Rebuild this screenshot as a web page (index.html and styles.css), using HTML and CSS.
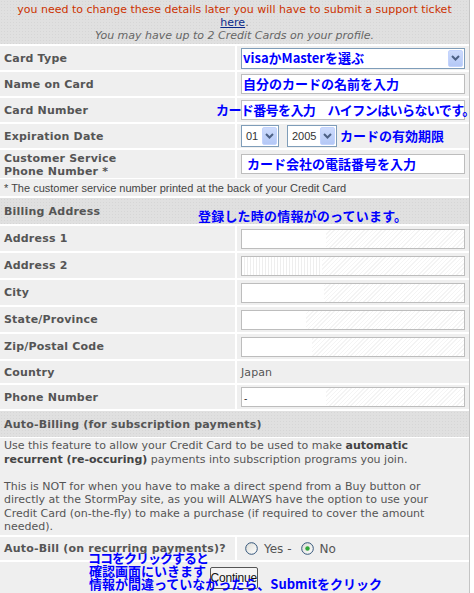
FILE: index.html
```html
<!DOCTYPE html>
<html lang="ja">
<head>
<meta charset="utf-8">
<title>Credit Card</title>
<link rel="stylesheet" href="styles.css">
</head>
<body>
<div class="page">
  <div class="notice">
    <div class="warn">you need to change these details later you will have to submit a support ticket</div>
    <div><a class="link" href="#">here</a>.</div>
    <div class="hint">You may have up to 2 Credit Cards on your profile.</div>
  </div>

  <div class="row h24">
    <div class="lab">Card Type</div>
    <div class="val">
      <div class="select wide">
        <span class="jp">visaかMasterを選ぶ</span>
        <span class="arrow"><svg width="9" height="6" viewBox="0 0 9 6"><path d="M1 1 L4.5 4.5 L8 1" fill="none" stroke="#4d6185" stroke-width="2"/></svg></span>
      </div>
    </div>
  </div>

  <div class="row h24">
    <div class="lab">Name on Card</div>
    <div class="val"><div class="field plain"><span class="jp">自分のカードの名前を入力</span></div></div>
  </div>

  <div class="row h24 rel">
    <div class="lab">Card Number</div>
    <div class="val"><div class="field plain"></div></div>
    <div class="note note-number">カード番号を入力　ハイフンはいらないです。</div>
  </div>

  <div class="row h24">
    <div class="lab">Expiration Date</div>
    <div class="val">
      <div class="select small month">
        <span class="opt">01</span>
        <span class="arrow"><svg width="9" height="6" viewBox="0 0 9 6"><path d="M1 1 L4.5 4.5 L8 1" fill="none" stroke="#4d6185" stroke-width="2"/></svg></span>
      </div>
      <div class="select small year">
        <span class="opt">2005</span>
        <span class="arrow"><svg width="9" height="6" viewBox="0 0 9 6"><path d="M1 1 L4.5 4.5 L8 1" fill="none" stroke="#4d6185" stroke-width="2"/></svg></span>
      </div>
      <span class="jp jp-after">カードの有効期限</span>
    </div>
  </div>

  <div class="row h28">
    <div class="lab two">Customer Service<br>Phone Number *</div>
    <div class="val"><div class="field plain"><span class="jp jp-pad">カード会社の電話番号を入力</span></div></div>
  </div>

  <div class="footnote">* The customer service number printed at the back of your Credit Card</div>

  <div class="section rel">
    <span>Billing Address</span>
    <div class="note note-billing">登録した時の情報がのっています。</div>
  </div>

  <div class="row h25">
    <div class="lab">Address 1</div>
    <div class="val"><div class="field"><span class="patch p84"></span></div></div>
  </div>
  <div class="row h25">
    <div class="lab">Address 2</div>
    <div class="val"><div class="field stripes"></div></div>
  </div>
  <div class="row h25">
    <div class="lab">City</div>
    <div class="val"><div class="field"><span class="patch p82"></span></div></div>
  </div>
  <div class="row h25">
    <div class="lab">State/Province</div>
    <div class="val"><div class="field"><span class="patch p64"></span></div></div>
  </div>
  <div class="row h25">
    <div class="lab">Zip/Postal Code</div>
    <div class="val"><div class="field"><span class="patch p70"></span></div></div>
  </div>
  <div class="row h22">
    <div class="lab">Country</div>
    <div class="val country">Japan</div>
  </div>
  <div class="row h24">
    <div class="lab">Phone Number</div>
    <div class="val"><div class="field"><span class="patch p84"></span><span class="dash">-</span></div></div>
  </div>

  <div class="section">
    <span>Auto-Billing (for subscription payments)</span>
  </div>

  <div class="info">
    <p>Use this feature to allow your Credit Card to be used to make <b>automatic recurrent (re-occuring)</b> payments into subscription programs you join.</p>
    <p>This is NOT for when you have to make a direct spend from a Buy button or directly at the StormPay site, as you will ALWAYS have the option to use your Credit Card (on-the-fly) to make a purchase (if required to cover the amount needed).</p>
  </div>

  <div class="row h23">
    <div class="lab">Auto-Bill (on recurring payments)?</div>
    <div class="val radios">
      <span class="radio"><svg width="13" height="13" viewBox="0 0 13 13"><defs><linearGradient id="rg" x1="0" y1="0" x2="1" y2="1"><stop offset="0" stop-color="#dcdcd6"/><stop offset="1" stop-color="#ffffff"/></linearGradient></defs><circle cx="6.5" cy="6.5" r="5.8" fill="url(#rg)" stroke="#33557a" stroke-width="1"/></svg></span>
      <span class="rlabel">Yes -</span>
      <span class="radio"><svg width="13" height="13" viewBox="0 0 13 13"><circle cx="6.5" cy="6.5" r="5.8" fill="url(#rg)" stroke="#33557a" stroke-width="1"/><circle cx="6.5" cy="6.5" r="2.2" fill="#2fa83a"/></svg></span>
      <span class="rlabel">No</span>
    </div>
  </div>

  <div class="bottom rel">
    <button class="continue" type="button">Continue</button>
    <div class="note note-b1">ココをクリックすると</div>
    <div class="note note-b2">確認画面にいきます</div>
    <div class="note note-b3">情報が間違っていなかったら、Submitをクリック</div>
  </div>
</div>
</body>
</html>
```

FILE: styles.css
```css
html, body {
  margin: 0;
  padding: 0;
  background: #ffffff;
}
body {
  font: 11px "DejaVu Sans", Verdana, sans-serif;
  color: #555555;
  overflow: hidden;
}
.page {
  width: 469px;
  border-right: 1px solid #c4c4c4;
  background: #ffffff;
}
.rel { position: relative; }

.notice {
  height: 44px;
  box-sizing: border-box;
  padding-top: 3px;
  background-color: #e0e0e0;
  background-image: radial-gradient(#d6d6d6 0.6px, transparent 0.7px);
  background-size: 3px 3px;
  text-align: center;
  line-height: 13px;
}
.warn { color: #cc3300; }
.link { color: #0a2a8a; text-decoration: underline; }
.hint { color: #666666; font-style: italic; }

.row {
  display: grid;
  grid-template-columns: 235px 1fr;
  margin-top: 2px;
}
.h22 { height: 22px; }
.h23 { height: 23px; }
.h24 { height: 24px; }
.h25 { height: 25px; }
.h28 { height: 28px; }

.lab {
  background: #efefef;
  padding-left: 4px;
  font-weight: bold;
  color: #555555;
  display: flex;
  align-items: center;
  letter-spacing: 0.2px;
}
.lab.two { line-height: 13px; align-items: flex-start; padding-top: 2px; }
.val {
  background: #efefef;
  margin-left: 2px;
  padding-left: 4px;
  display: flex;
  align-items: center;
}

.jp {
  font-family: "Noto Sans CJK JP", sans-serif;
  font-weight: bold;
  font-size: 13px;
  color: #0000ff;
  line-height: 16px;
  white-space: nowrap;
}
.jp-pad { padding-left: 4px; }
.jp-after { margin-left: 3px; }

.field {
  position: relative;
  width: 224px;
  height: 20px;
  box-sizing: border-box;
  border: 1px solid #bdbdbd;
  background: repeating-linear-gradient(135deg, #ffffff 0 2px, #f4f4f4 2px 3px);
  display: flex;
  align-items: center;
  padding-left: 1px;
}
.field.plain { background: #ffffff; }
.field.stripes {
  background:
    repeating-linear-gradient(90deg, #ffffff 0 2px, #eeeeee 2px 3px) left / 80px 100% no-repeat,
    repeating-linear-gradient(135deg, #ffffff 0 2px, #f4f4f4 2px 3px);
}
.patch {
  position: absolute;
  left: 0;
  top: 0;
  bottom: 0;
  background: #ffffff;
}
.p64 { width: 64px; }
.p70 { width: 70px; }
.p82 { width: 82px; }
.p84 { width: 84px; }
.dash {
  position: absolute;
  left: 2px;
  top: 5px;
  font: 10px "Liberation Sans", Arial, sans-serif;
  color: #333;
}

.select {
  box-sizing: border-box;
  height: 21px;
  border: 1px solid #7f9db9;
  background: #ffffff;
  display: flex;
  align-items: center;
  justify-content: space-between;
  padding-left: 1px;
}
.select.wide { width: 224px; }
.select.small { height: 22px; }
.select.month { width: 38px; }
.select.year { width: 50px; margin-left: 8px; }
.opt {
  font: 11px "Liberation Sans", Arial, sans-serif;
  color: #333333;
  padding-left: 3px;
}
.arrow {
  width: 15px;
  height: 17px;
  margin-right: 1px;
  box-sizing: border-box;
  border: 1px solid #c3d3fd;
  border-radius: 2px;
  background: linear-gradient(#cddbfc, #b4c8f6);
  display: flex;
  align-items: center;
  justify-content: center;
}
.select.small .arrow { height: 18px; }

.country {
  color: #555555;
  letter-spacing: 0.1px;
}

.footnote {
  background: #efefef;
  height: 17px;
  margin-top: 1px;
  padding-left: 4px;
  display: flex;
  align-items: center;
  font: 11px "Liberation Sans", Arial, sans-serif;
  color: #444444;
}

.section {
  margin-top: 2px;
  height: 26px;
  box-sizing: border-box;
  padding-left: 4px;
  padding-top: 1px;
  background-color: #e0e0e0;
  background-image: radial-gradient(#d6d6d6 0.6px, transparent 0.7px);
  background-size: 3px 3px;
  display: flex;
  align-items: center;
  font-weight: bold;
  color: #555555;
  letter-spacing: 0.2px;
}

.info {
  margin-top: 1px;
  background: #efefef;
  padding: 1px 8px 1px 4px;
  line-height: 13.5px;
  color: #555555;
}
.info p { margin: 0 0 13.5px 0; }
.info p:last-child { margin-bottom: 0; }
.info b { color: #444444; }

.radios { padding-left: 8px; }
.radio { display: inline-flex; width: 13px; height: 13px; }
.rlabel {
  font-size: 12px;
  color: #555555;
  margin-left: 6px;
  margin-right: 9px;
  padding-top: 2px;
}

.bottom {
  margin-top: 2px;
  height: 33px;
  background: #efefef;
  display: flex;
  justify-content: center;
  align-items: flex-start;
}
.continue {
  margin-top: 5px;
  margin-left: -2px;
  height: 22px;
  width: 48px;
  padding: 0;
  border: 1px solid #555555;
  border-radius: 2px;
  background: #f4f4f4;
  font: 12px "Liberation Sans", Arial, sans-serif;
  color: #111111;
  letter-spacing: -0.2px;
}

.note {
  position: absolute;
  font-family: "Noto Sans CJK JP", sans-serif;
  font-weight: bold;
  font-size: 13px;
  line-height: 14px;
  color: #0000ff;
  white-space: nowrap;
}
.note-number { left: 216px; top: 5px; letter-spacing: -0.6px; }
.note-billing { left: 198px; top: 11px; }
.note-b1 { left: 88px; top: -11px; letter-spacing: -1px; }
.note-b2 { left: 89px; top: 2px; }
.note-b3 { left: 89px; top: 15px; }
```
